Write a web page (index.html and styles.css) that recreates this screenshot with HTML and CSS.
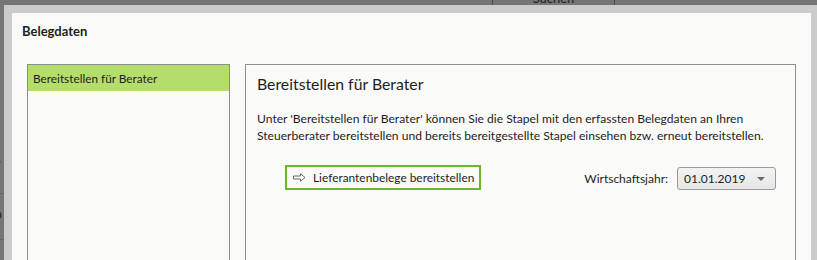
FILE: index.html
```html
<!DOCTYPE html>
<html lang="de">
<head>
<meta charset="utf-8">
<link rel="stylesheet" href="styles.css">
</head>
<body>
<div class="backdrop">
  <div class="bg-toolbar">
    <div class="bg-btn">Suchen</div>
  </div>
  <div class="bg-side">
    <span class="bg-link">r</span>
    <div class="bg-line"></div>
    <span class="bg-txt">a</span>
    <div class="bg-line"></div>
  </div>
</div>

<div class="dialog">
  <div class="dialog-title">Belegdaten</div>
  <div class="dialog-body">
    <ul class="nav-list">
      <li class="nav-item selected">Bereitstellen für Berater</li>
    </ul>
    <section class="panel">
      <h2 class="panel-title">Bereitstellen für Berater</h2>
      <p class="panel-desc">Unter 'Bereitstellen für Berater' können Sie die Stapel mit den erfassten Belegdaten an Ihren<br>Steuerberater bereitstellen und bereits bereitgestellte Stapel einsehen bzw. erneut bereitstellen.</p>
      <div class="action-row">
        <button class="action-btn">
          <svg class="arrow" width="13" height="9" viewBox="0 0 13 9">
            <path d="M0.5 3H7.5V0.8L12 4.5L7.5 8.2V6H0.5Z" fill="none" stroke="#6d6d6d" stroke-width="1"/>
          </svg>
          <span>Lieferantenbelege bereitstellen</span>
        </button>
        <div class="year">
          <span class="year-label">Wirtschaftsjahr:</span>
          <div class="select">
            <span>01.01.2019</span>
            <svg width="8" height="4" viewBox="0 0 8 4"><path d="M0 0H8L4 4Z" fill="#6a6a6a"/></svg>
          </div>
        </div>
      </div>
    </section>
  </div>
</div>
</body>
</html>
```

FILE: styles.css
```css
html, body {
  margin: 0;
  padding: 0;
}
body {
  width: 817px;
  height: 260px;
  overflow: hidden;
  background: #767676;
  font-family: "Lato", "Noto Sans", sans-serif;
  color: #1e1e1e;
  position: relative;
}
.backdrop {
  height: 260px;
}
.bg-toolbar {
  display: flex;
  height: 5px;
  overflow: hidden;
  margin-left: 492px;
}
.bg-btn {
  width: 121px;
  border-left: 1px solid #4a4a4a;
  border-right: 1px solid #4a4a4a;
  text-align: center;
  font-size: 13px;
  line-height: 13px;
  margin-top: -8px;
  color: #222;
}
.bg-side {
  width: 4px;
  padding-top: 150px;
  overflow: hidden;
}
.bg-link {
  display: block;
  color: #0b5a5a;
  font-family: "Liberation Serif", serif;
  font-size: 16px;
  margin-left: -5px;
  height: 20px;
}
.bg-line {
  height: 1px;
  background: #666;
  margin: 18px 0 12px;
}
.bg-txt {
  display: block;
  font-size: 12px;
  margin-left: -4px;
  color: #222;
}

.dialog {
  position: absolute;
  left: 4px;
  top: 5px;
  right: 0;
  bottom: 0;
  display: flex;
  flex-direction: column;
  overflow: hidden;
  background: #fafaf9;
  border-left: 8px solid #cbcbcb;
  border-top: 8px solid #cbcbcb;
  border-right: 6px solid #cbcbcb;
}
.dialog-title {
  font-weight: 700;
  font-size: 13px;
  line-height: 18px;
  padding: 9px 0 0 10px;
  height: 42px;
  box-sizing: border-box;
  margin-bottom: 9px;
}
.dialog-body {
  flex: 1;
  display: grid;
  grid-template-columns: 203px minmax(0, 1fr);
  column-gap: 15px;
  margin: 0 15px;
}
.nav-list {
  list-style: none;
  margin: 0;
  padding: 0;
  border: 1px solid #8e8e8e;
  border-bottom: none;
}
.nav-item {
  height: 26px;
  line-height: 27px;
  padding-left: 5px;
  font-size: 11.8px;
}
.nav-item.selected {
  background: #b5dd6c;
}
.panel {
  border: 1px solid #8e8e8e;
  border-bottom: none;
  padding: 0 19px 0 11px;
}
.panel-title {
  font-weight: 400;
  font-size: 15.8px;
  margin: 9px 0 0;
  line-height: 20px;
}
.panel-desc {
  margin: 16px 0 0;
  font-size: 12.1px;
  line-height: 17px;
  white-space: nowrap;
}
.action-row {
  display: flex;
  align-items: center;
  justify-content: space-between;
  margin-top: 20px;
  padding-left: 28px;
}
.action-btn {
  display: flex;
  align-items: center;
  gap: 7px;
  height: 25px;
  box-sizing: border-box;
  border: 2px solid #6cb52f;
  background: #fafaf9;
  padding: 0 5px 0 6px;
  font-family: inherit;
  font-size: 11.9px;
  color: #1e1e1e;
}
.year {
  display: flex;
  align-items: center;
  gap: 9px;
  margin-top: 3px;
}
.year-label {
  font-size: 12px;
}
.select {
  display: flex;
  align-items: center;
  justify-content: space-between;
  width: 99px;
  height: 23px;
  box-sizing: border-box;
  border: 1px solid #9a9a9a;
  border-radius: 3px;
  background: linear-gradient(#f3f3f3, #e6e6e6);
  padding: 0 10px 0 6px;
  font-size: 12px;
}
```
